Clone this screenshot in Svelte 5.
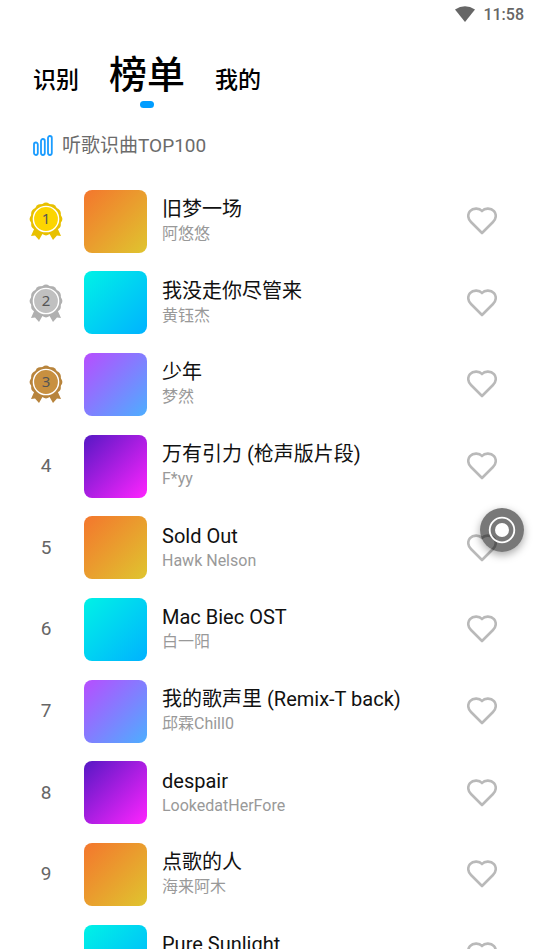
<script>
  let activeTab = $state("榜单");
  let liked = $state({});

  const tabs = ["识别", "榜单", "我的"];

  const songs = [
    { title: "旧梦一场", artist: "阿悠悠" },
    { title: "我没走你尽管来", artist: "黄钰杰" },
    { title: "少年", artist: "梦然" },
    { title: "万有引力 (枪声版片段)", artist: "F*yy" },
    { title: "Sold Out", artist: "Hawk Nelson" },
    { title: "Mac Biec OST", artist: "白一阳" },
    { title: "我的歌声里 (Remix-T back)", artist: "邱霖Chill0" },
    { title: "despair", artist: "LookedatHerFore" },
    { title: "点歌的人", artist: "海来阿木" },
    { title: "Pure Sunlight", artist: "Matt Wigton" },
  ];

  const covers = ["orange", "cyan", "violet", "magenta"];
  const medals = ["gold", "silver", "bronze"];

  // twelve bumps around the medal
  const petals = Array.from({ length: 12 }, (_, i) => {
    const a = (i * Math.PI) / 6;
    return { x: 17 + 12 * Math.sin(a), y: 17 - 12 * Math.cos(a) };
  });

  function toggleLike(i) {
    liked[i] = !liked[i];
  }
</script>

<div class="app">
  <div class="status">
    <svg class="wifi" viewBox="0 0 20 16" aria-hidden="true">
      <path d="M0 3.5Q10-3 20 3.5L10 16Z" />
    </svg>
    <span>11:58</span>
  </div>

  <nav class="tabs">
    {#each tabs as tab}
      <button
        class="tab"
        class:active={activeTab === tab}
        onclick={() => (activeTab = tab)}>{tab}</button
      >
    {/each}
  </nav>

  <h2 class="heading">
    <svg class="bars" viewBox="0 0 20 22" aria-hidden="true">
      <rect x="1" y="7.500" width="3.800" height="12.500" rx="1.900" />
      <rect x="8" y="4" width="3.800" height="16" rx="1.900" />
      <rect x="15" y="1" width="3.800" height="19" rx="1.900" />
    </svg>
    听歌识曲TOP100
  </h2>

  <ol class="songs">
    {#each songs as song, i}
      <li class="song">
        <div class="rank">
          {#if i < 3}
            <div class="medal {medals[i]}">
              <svg viewBox="0 0 34 38" aria-hidden="true">
                <path
                  d="M6 25L2 34L6 33.500L10 38L14 31H20L24 38L28 33.500L32 34L28 25Z"
                />
                {#each petals as p}
                  <circle cx={p.x} cy={p.y} r="4.4" />
                {/each}
                <circle cx="17" cy="17" r="15.4" />
                <circle class="face" cx="17" cy="17" r="12.6" />
              </svg>
              <span>{i + 1}</span>
            </div>
          {:else}
            {i + 1}
          {/if}
        </div>
        <div class="cover {covers[i % 4]}"></div>
        <div class="info">
          <div class="title">{song.title}</div>
          <div class="artist">{song.artist}</div>
        </div>
        <button
          class="like"
          class:liked={liked[i]}
          aria-label="收藏 {song.title}"
          onclick={() => toggleLike(i)}
        >
          <svg viewBox="0 0 30 28" aria-hidden="true">
            <path
              d="M15 26L4 15C.5 11.500.5 7 3 4.200C6 1 12 .5 15 4C18 .5 24 1 27 4.200C29.500 7 29.500 11.500 26 15Z"
            />
          </svg>
        </button>
      </li>
    {/each}
  </ol>

  <button class="float" aria-label="识别">
    <svg viewBox="0 0 44 44" aria-hidden="true">
      <circle cx="22" cy="22" r="12.3" fill="none" stroke="#fff" stroke-width="1.8" />
      <circle cx="22" cy="22" r="7" fill="#fff" />
    </svg>
  </button>
</div>

<style>
  :global(body) {
    background: #fff;
    font-family: Roboto, "Noto Sans CJK SC", sans-serif;
  }

  button {
    padding: 0;
    border: none;
    background: none;
    font-family: inherit;
    cursor: pointer;
  }

  svg {
    display: block;
  }

  .app {
    height: 100vh;
    display: flex;
    flex-direction: column;
    overflow: hidden;
  }

  .status {
    flex: none;
    height: 28px;
    padding-right: 10px;
    display: flex;
    align-items: center;
    justify-content: flex-end;
    gap: 8px;
    color: #666;
    font-size: 16px;
    font-weight: 500;
  }

  .wifi {
    width: 20px;
    height: 16px;
    fill: #666;
  }

  .tabs {
    flex: none;
    height: 80px;
    padding: 0 33px;
    display: flex;
    align-items: flex-end;
    gap: 30px;
  }

  .tab {
    padding-bottom: 11px;
    color: #000;
    font-size: 23px;
    line-height: 32px;
    font-weight: 500;
  }

  .tab.active {
    padding-bottom: 0;
    font-size: 38px;
    line-height: 48px;
  }

  .tab.active::after {
    content: "";
    display: block;
    width: 14px;
    height: 7px;
    margin: 2px auto 0;
    border-radius: 4px;
    background: #009dff;
  }

  .heading {
    flex: none;
    margin: 24px 33px 0;
    display: flex;
    align-items: center;
    gap: 9px;
    color: #6b6b6b;
    font-size: 19px;
    line-height: 28px;
    font-weight: 400;
  }

  .bars {
    width: 20px;
    height: 22px;
    fill: none;
    stroke: #1a9cff;
    stroke-width: 1.8;
  }

  .songs {
    flex: 1;
    min-height: 0;
    margin: 20px 0 0;
    padding: 0;
    list-style: none;
    overflow-y: auto;
    scrollbar-width: none;
  }

  .song {
    height: 82px;
    padding: 0 37px 0 29px;
    display: flex;
    align-items: center;
  }

  .song:nth-child(3n + 2) {
    height: 81px;
  }

  .rank {
    flex: none;
    width: 34px;
    margin-right: 21px;
    color: #666;
    font-size: 19px;
    line-height: 24px;
    text-align: center;
  }

  .medal {
    display: grid;
  }

  .medal svg,
  .medal span {
    grid-area: 1 / 1;
  }

  .medal svg {
    width: 34px;
    height: 38px;
  }

  .medal span {
    font-family: "Noto Sans", sans-serif;
    font-size: 15px;
    line-height: 32px;
    color: #555;
  }

  .face {
    stroke: #fff;
    stroke-width: 1.4;
  }

  .gold {
    fill: #e8c000;
  }

  .gold .face {
    fill: #fcd500;
  }

  .silver {
    fill: #b0b0b0;
  }

  .silver .face {
    fill: #c0c0c0;
  }

  .bronze {
    fill: #b8843c;
  }

  .bronze .face {
    fill: #c89040;
  }

  .cover {
    flex: none;
    width: 63px;
    height: 63px;
    margin-right: 15px;
    border-radius: 8px;
  }

  .orange {
    background: linear-gradient(135deg, #f4762d, #dfc52f);
  }

  .cyan {
    background: linear-gradient(135deg, #00f2e6, #00b2ff);
  }

  .violet {
    background: linear-gradient(135deg, #b84dff, #4daeff);
  }

  .magenta {
    background: linear-gradient(135deg, #5618c4, #ff24ff);
  }

  .info {
    flex: 1;
    min-width: 0;
    white-space: nowrap;
  }

  .title {
    color: #111;
    font-size: 20px;
    line-height: 26px;
  }

  .artist {
    color: #999;
    font-size: 16px;
    line-height: 24px;
  }

  .like {
    flex: none;
  }

  .like svg {
    width: 30px;
    height: 28px;
    fill: none;
    stroke: #b9b9b9;
    stroke-width: 2.6;
    stroke-linejoin: round;
  }

  .like.liked svg {
    fill: #ff5a5a;
    stroke: #ff5a5a;
  }

  .float {
    position: fixed;
    right: 10px;
    top: 508px;
    width: 44px;
    height: 44px;
    border-radius: 50%;
    background: rgba(0, 0, 0, 0.53);
    box-shadow: 0 3px 8px rgba(0, 0, 0, 0.35);
  }
</style>
